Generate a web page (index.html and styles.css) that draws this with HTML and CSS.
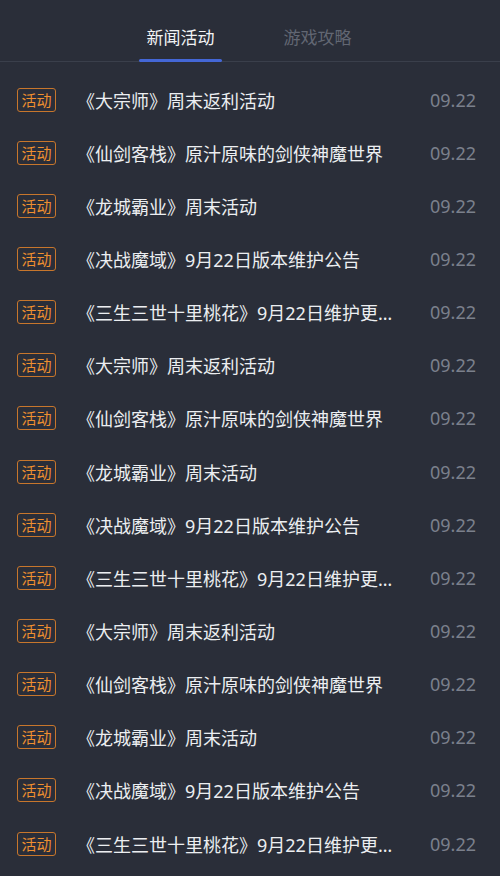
FILE: index.html
```html
<!DOCTYPE html>
<html lang="zh-CN">
<head>
  <meta charset="UTF-8">
  <meta name="viewport" content="width=device-width, initial-scale=1.0">
  <title>新闻活动</title>
  <link rel="stylesheet" href="styles.css">
</head>
<body>

  <div class="news-panel">
    <nav class="tabs">
      <a class="tab active">新闻活动</a>
      <a class="tab">游戏攻略</a>
    </nav>

    <ul class="news-list">
      <li class="news-item"><span class="tag">活动</span><span class="title">《大宗师》周末返利活动</span><span class="date">09.22</span></li>
      <li class="news-item"><span class="tag">活动</span><span class="title">《仙剑客栈》原汁原味的剑侠神魔世界</span><span class="date">09.22</span></li>
      <li class="news-item"><span class="tag">活动</span><span class="title">《龙城霸业》周末活动</span><span class="date">09.22</span></li>
      <li class="news-item"><span class="tag">活动</span><span class="title">《决战魔域》9月22日版本维护公告</span><span class="date">09.22</span></li>
      <li class="news-item"><span class="tag">活动</span><span class="title">《三生三世十里桃花》9月22日维护更新公告</span><span class="date">09.22</span></li>
      <li class="news-item"><span class="tag">活动</span><span class="title">《大宗师》周末返利活动</span><span class="date">09.22</span></li>
      <li class="news-item"><span class="tag">活动</span><span class="title">《仙剑客栈》原汁原味的剑侠神魔世界</span><span class="date">09.22</span></li>
      <li class="news-item"><span class="tag">活动</span><span class="title">《龙城霸业》周末活动</span><span class="date">09.22</span></li>
      <li class="news-item"><span class="tag">活动</span><span class="title">《决战魔域》9月22日版本维护公告</span><span class="date">09.22</span></li>
      <li class="news-item"><span class="tag">活动</span><span class="title">《三生三世十里桃花》9月22日维护更新公告</span><span class="date">09.22</span></li>
      <li class="news-item"><span class="tag">活动</span><span class="title">《大宗师》周末返利活动</span><span class="date">09.22</span></li>
      <li class="news-item"><span class="tag">活动</span><span class="title">《仙剑客栈》原汁原味的剑侠神魔世界</span><span class="date">09.22</span></li>
      <li class="news-item"><span class="tag">活动</span><span class="title">《龙城霸业》周末活动</span><span class="date">09.22</span></li>
      <li class="news-item"><span class="tag">活动</span><span class="title">《决战魔域》9月22日版本维护公告</span><span class="date">09.22</span></li>
      <li class="news-item"><span class="tag">活动</span><span class="title">《三生三世十里桃花》9月22日维护更新公告</span><span class="date">09.22</span></li>
    </ul>
  </div>

</body>
</html>
```

FILE: styles.css
```css
* {
  margin: 0;
  padding: 0;
  box-sizing: border-box;
}

body {
  font-family: "Noto Sans", "Noto Sans CJK SC", sans-serif;
  background: #2a2e39;
  color: #fff;
  height: 100vh;
  overflow: hidden;
}

.news-panel {
  width: 100%;
}

.tabs {
  display: flex;
  justify-content: center;
  gap: 54px;
  height: 62px;
  padding-right: 2px;
  border-bottom: 1px solid #3a3f4b;
}

.tab {
  position: relative;
  width: 83px;
  padding-top: 24px;
  font-size: 17px;
  line-height: 28px;
  text-align: center;
  color: #626773;
  cursor: pointer;
}

.tab.active {
  color: #f2f3f5;
}

.tab.active::after {
  content: "";
  position: absolute;
  left: 0;
  right: 0;
  bottom: -1px;
  height: 3px;
  background: #4467d6;
  border-radius: 2px;
}

.news-list {
  list-style: none;
  padding-top: 11px;
}

.news-item {
  display: flex;
  align-items: center;
  height: 53.15px;
  padding: 0 24px 0 17px;
}

.tag {
  flex: none;
  width: 39px;
  height: 24px;
  border: 1px solid #c7762c;
  border-radius: 3px;
  color: #ee8f30;
  font-size: 15px;
  line-height: 22px;
  text-align: center;
}

.title {
  flex: none;
  width: 321px;
  margin-left: 21px;
  font-size: 18px;
  color: #eceef1;
  white-space: nowrap;
  overflow: hidden;
  text-overflow: ellipsis;
}

.date {
  margin-left: auto;
  font-size: 18px;
  color: #7b808c;
}
```
